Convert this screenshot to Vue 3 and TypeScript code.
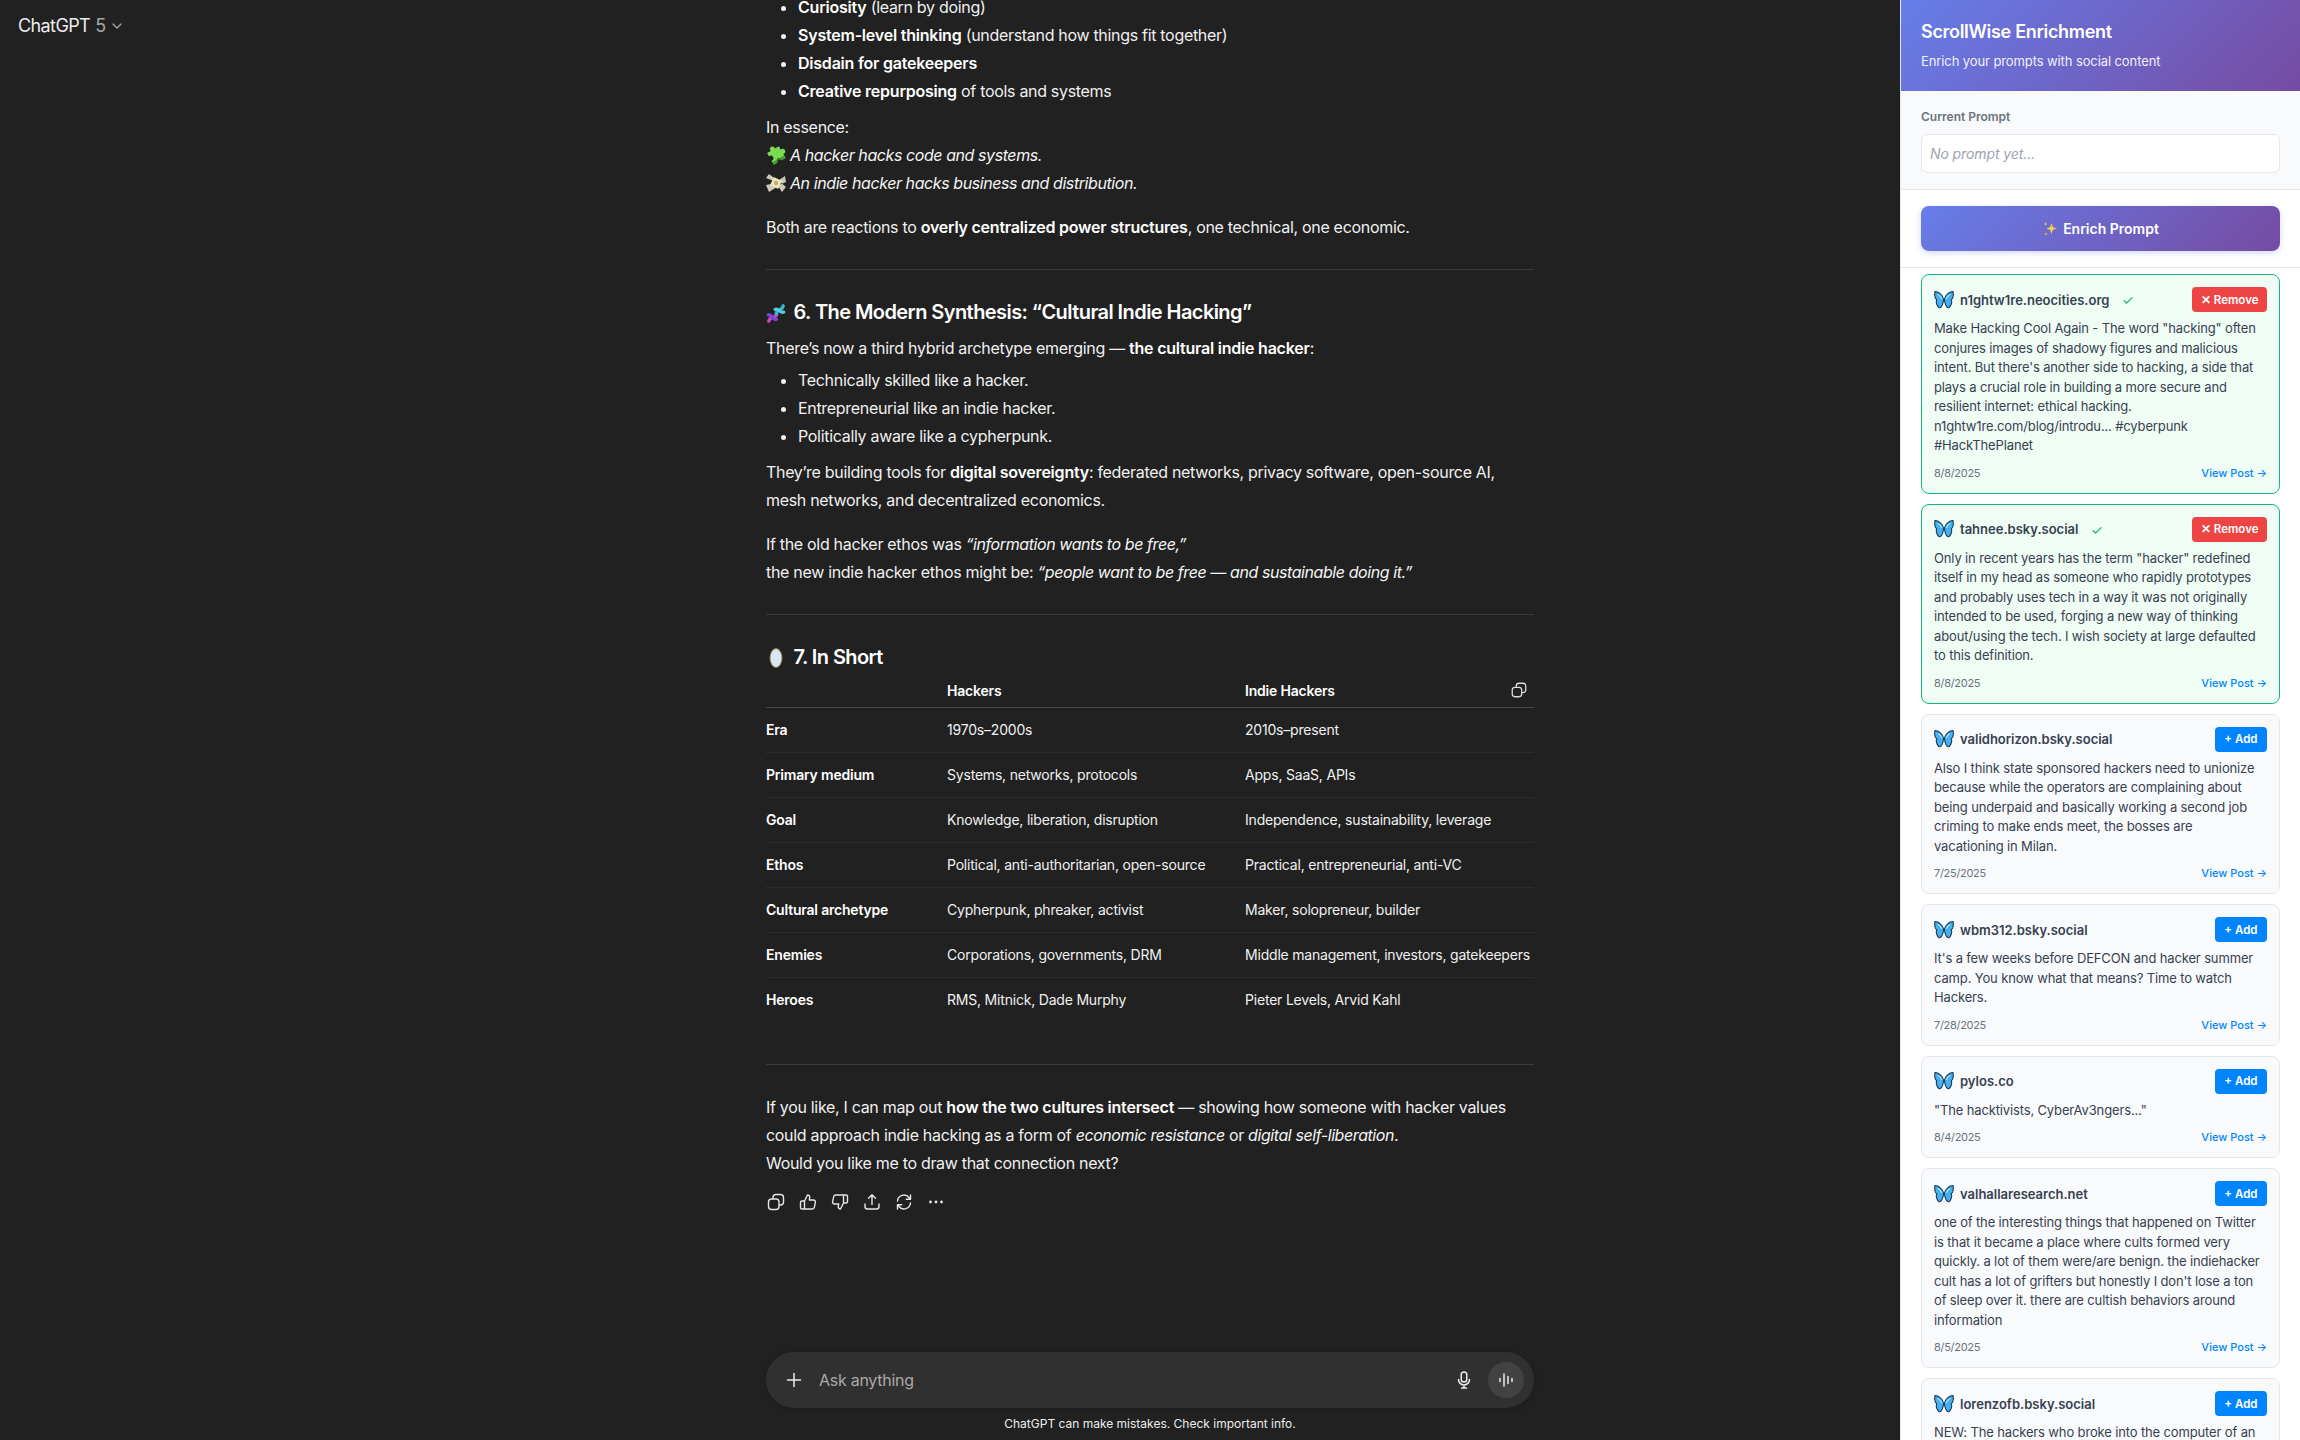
<template>
  <div class="page">
    <main class="chat">
      <!-- 顶部模型选择 -->
      <div class="model-switch">
        <span>ChatGPT</span>
        <span class="model-num">5</span>
        <svg width="10" height="6" viewBox="0 0 10 6" fill="none" stroke="#a8a8a8" stroke-width="1.3" stroke-linecap="round" stroke-linejoin="round"><path d="M1 1l4 4 4-4" /></svg>
      </div>

      <div class="thread">
        <div class="article">
          <ul class="first-list">
            <li><b>Curiosity</b> (learn by doing)</li>
            <li><b>System-level thinking</b> (understand how things fit together)</li>
            <li><b>Disdain for gatekeepers</b></li>
            <li><b>Creative repurposing</b> of tools and systems</li>
          </ul>
          <p>
            In essence:<br />
            <svg class="emoji" viewBox="0 0 20 20">
              <g transform="rotate(-30 10 10) translate(10 10) scale(1.12) translate(-9.500 -11.500)">
                <path d="M3.500 6h3.700a2.300 2.300 0 1 1 4.400 0h4v3.500a2.300 2.300 0 1 1 0 4.400V18h-4a2.300 2.300 0 1 0-4.400 0H3.500v-4.100a2.300 2.300 0 1 0 0-4.400z" fill="#7bdc52" />
                <path d="M3.500 15.500V18h3.700a2.300 2.300 0 0 1 4.400 0h4v-2.500z" fill="#3f9a35" />
              </g>
            </svg>
            <i>A hacker hacks code and systems.</i><br />
            <svg class="emoji" viewBox="0 0 20 20">
              <path d="M10 9L0 5l3-4 8 6zM10 9l9-6 1 6-7 3zM10 10L0 12l3 7 8-5zM10 10l6 9 4-5-7-6z" fill="#cdcab8" />
              <rect x="5.500" y="5.500" width="9" height="9" rx="1" transform="rotate(25 10 10)" fill="#efe6bd" />
              <circle cx="10" cy="10" r="2.200" fill="#c2ae62" />
            </svg>
            <i>An indie hacker hacks business and distribution.</i>
          </p>
          <p>Both are reactions to <b>overly centralized power structures</b>, one technical, one economic.</p>
          <hr />
          <h3>
            <svg class="emoji dna" viewBox="0 0 22 22" fill="none" stroke-width="3.600" stroke-linecap="round">
              <path d="M3 20c2-7 8-2 9-8" stroke="#d43fc0" />
              <path d="M11 12c1-6 6-2 8-9" stroke="#38b6cf" />
              <path d="M2.500 13c4-1 5 7 9 5" stroke="#7a45d8" />
              <path d="M10 7c4-2 5 5 9.500 3" stroke="#4fd0dc" />
            </svg>
            6. The Modern Synthesis: “Cultural Indie Hacking”
          </h3>
          <p class="tight">There’s now a third hybrid archetype emerging — <b>the cultural indie hacker</b>:</p>
          <ul>
            <li>Technically skilled like a hacker.</li>
            <li>Entrepreneurial like an indie hacker.</li>
            <li>Politically aware like a cypherpunk.</li>
          </ul>
          <p>They’re building tools for <b>digital sovereignty</b>: federated networks, privacy software, open-source AI, mesh networks, and decentralized economics.</p>
          <p>If the old hacker ethos was <i>“information wants to be free,”</i><br />the new indie hacker ethos might be: <i>“people want to be free — and sustainable doing it.”</i></p>
          <hr />
          <h3 class="short">
            <svg class="emoji" viewBox="0 0 20 20">
              <ellipse cx="10" cy="10" rx="6.500" ry="10" fill="#9a7b4a" />
              <ellipse cx="10" cy="10" rx="5.500" ry="9" fill="#d7e9f7" />
            </svg>
            7. In Short
          </h3>
          <div class="table-wrap">
            <svg class="table-copy" width="18" height="18" viewBox="0 0 20 20" fill="none" stroke="#dcdcdc" stroke-width="1.4"><rect x="7" y="2.500" width="10.500" height="10.500" rx="3" /><rect x="2.500" y="7" width="10.500" height="10.500" rx="3" fill="#212121" /></svg>
            <table>
              <colgroup>
                <col class="col-a" />
                <col class="col-b" />
                <col />
              </colgroup>
              <thead>
                <tr>
                  <th></th>
                  <th>Hackers</th>
                  <th>Indie Hackers</th>
                </tr>
              </thead>
              <tbody>
                <tr v-for="row in compareRows" :key="row[0]">
                  <td class="row-name">{{ row[0] }}</td>
                  <td>{{ row[1] }}</td>
                  <td>{{ row[2] }}</td>
                </tr>
              </tbody>
            </table>
          </div>
          <hr class="after-table" />
          <p class="tight">
            If you like, I can map out <b>how the two cultures intersect</b> — showing how someone with hacker values could approach indie hacking as a form of <i>economic resistance</i> or <i>digital self-liberation</i>.<br />
            Would you like me to draw that connection next?
          </p>
          <div class="actions">
            <svg viewBox="0 0 20 20"><rect x="7" y="2.500" width="10.500" height="10.500" rx="3" /><rect x="2.500" y="7" width="10.500" height="10.500" rx="3" fill="#212121" /></svg>
            <svg viewBox="0 0 20 20"><path d="M6.500 9l3-6c1.500 0 2.500 1 2.200 2.600L11.300 8h4.200c1.300 0 2.200 1.200 1.900 2.400l-1.100 5c-.2 1-1 1.600-2 1.600H6.500zM6.500 9H4a1.500 1.500 0 0 0-1.500 1.500v5A1.500 1.500 0 0 0 4 17h2.500" /></svg>
            <svg viewBox="0 0 20 20"><path d="M13.500 11l-3 6c-1.500 0-2.500-1-2.200-2.600L8.700 12H4.500c-1.300 0-2.200-1.200-1.900-2.400l1.100-5c.2-1 1-1.600 2-1.600h7.800zM13.500 11H16a1.500 1.500 0 0 0 1.500-1.500v-5A1.500 1.500 0 0 0 16 3h-2.500" /></svg>
            <svg viewBox="0 0 20 20"><path d="M10 12.500V3M6.500 6.300L10 2.800l3.500 3.500M3 12v2.500A2.500 2.500 0 0 0 5.500 17h9a2.500 2.500 0 0 0 2.500-2.500V12" /></svg>
            <svg viewBox="0 0 20 20"><path d="M3.500 9a6.500 6.500 0 0 1 11.500-3.500l1.500 1.700M16.500 3v4.200h-4.200M16.500 11a6.500 6.500 0 0 1-11.500 3.500l-1.500-1.700M3.500 17v-4.200h4.200" /></svg>
            <svg viewBox="0 0 20 20"><circle cx="4.500" cy="10" r=".7" /><circle cx="10" cy="10" r=".7" /><circle cx="15.500" cy="10" r=".7" /></svg>
          </div>
        </div>
      </div>

      <!-- 输入框 -->
      <div class="composer-area">
        <div class="composer">
          <svg class="plus" width="16" height="16" viewBox="0 0 16 16" fill="none" stroke="#ececec" stroke-width="1.5" stroke-linecap="round"><path d="M8 1.500v13M1.500 8h13" /></svg>
          <span class="placeholder">Ask anything</span>
          <svg class="mic" width="20" height="20" viewBox="0 0 20 20" fill="none" stroke="#ececec" stroke-width="1.500" stroke-linecap="round"><rect x="7.200" y="2" width="5.600" height="10" rx="2.800" /><path d="M4.500 9.500a5.500 5.500 0 0 0 11 0M10 15v3M7.500 18h5" /></svg>
          <span class="voice">
            <svg width="18" height="18" viewBox="0 0 18 18" fill="none" stroke="#ececec" stroke-width="1.500" stroke-linecap="round"><path d="M3 7.500v3M7 3v12M11 5.500v7M15 7.500v3" /></svg>
          </span>
        </div>
        <div class="disclaimer">ChatGPT can make mistakes. Check important info.</div>
      </div>
    </main>

    <aside class="panel">
      <header class="panel-head">
        <h2>ScrollWise Enrichment</h2>
        <p>Enrich your prompts with social content</p>
      </header>
      <section class="prompt-box">
        <label>Current Prompt</label>
        <div class="prompt-input">No prompt yet...</div>
      </section>
      <section class="enrich-box">
        <button class="enrich-btn">
          <svg width="16" height="16" viewBox="0 0 16 16">
            <path d="M9.500 2l1.300 4.200L15 7.500l-4.200 1.300L9.500 13 8.200 8.800 4 7.500l4.200-1.300z" fill="#f7d64a" />
            <path d="M3.500 1l.5 1.500 1.500.5-1.500.5L3.500 5 3 3.500 1.500 3 3 2.500z" fill="#f2c94c" />
            <path d="M4 11l.5 1.500 1.500.5-1.500.5L4 15l-.5-1.500L2 13l1.500-.5z" fill="#e8bd3f" />
          </svg>
          Enrich Prompt
        </button>
      </section>
      <div class="post-list">
        <article v-for="post in posts" :key="post.handle" class="post" :class="{ selected: post.added }">
          <div class="post-top">
            <div class="author">
              <svg class="butterfly" width="20" height="18" viewBox="0 0 20 18">
                <path d="M9.700 8.500C9 4.500 5 .8 1 .5c-.6 3.500-.3 7 1.800 8.500-1 1.500-.5 5 2 7.500 2.200 1 3.800-1.500 4.900-8z" fill="#46b0ee" stroke="#17365a" stroke-width="1.100" stroke-linejoin="round" />
                <path d="M10.300 8.500C11 4.500 15 .8 19 .5c.6 3.500.3 7-1.800 8.500 1 1.500.5 5-2 7.500-2.200 1-3.800-1.500-4.900-8z" fill="#46b0ee" stroke="#17365a" stroke-width="1.100" stroke-linejoin="round" />
                <path d="M4 3.500c1.500.8 3 2.500 4 4.500M16 3.500c-1.500.8-3 2.500-4 4.500" stroke="#a8e0fb" stroke-width="1.200" fill="none" />
              </svg>
              <span class="handle">{{ post.handle }}</span>
              <span v-if="post.added" class="tick">✓</span>
            </div>
            <button v-if="post.added" class="btn-remove">✕ Remove</button>
            <button v-else class="btn-add">+ Add</button>
          </div>
          <p class="post-text">{{ post.text }}</p>
          <div class="post-foot">
            <span class="post-date">{{ post.date }}</span>
            <span class="post-link">View Post →</span>
          </div>
        </article>
      </div>
    </aside>
  </div>
</template>

<script setup lang="ts">
interface Post {
  handle: string
  text: string
  date: string
  added?: boolean
}

const compareRows: string[][] = [
  ['Era', '1970s–2000s', '2010s–present'],
  ['Primary medium', 'Systems, networks, protocols', 'Apps, SaaS, APIs'],
  ['Goal', 'Knowledge, liberation, disruption', 'Independence, sustainability, leverage'],
  ['Ethos', 'Political, anti-authoritarian, open-source', 'Practical, entrepreneurial, anti-VC'],
  ['Cultural archetype', 'Cypherpunk, phreaker, activist', 'Maker, solopreneur, builder'],
  ['Enemies', 'Corporations, governments, DRM', 'Middle management, investors, gatekeepers'],
  ['Heroes', 'RMS, Mitnick, Dade Murphy', 'Pieter Levels, Arvid Kahl'],
]

const posts: Post[] = [
  {
    handle: 'n1ghtw1re.neocities.org',
    added: true,
    date: '8/8/2025',
    text: 'Make Hacking Cool Again - The word "hacking" often conjures images of shadowy figures and malicious intent. But there\'s another side to hacking, a side that plays a crucial role in building a more secure and resilient internet: ethical hacking. n1ghtw1re.com/blog/introdu... #cyberpunk #HackThePlanet',
  },
  {
    handle: 'tahnee.bsky.social',
    added: true,
    date: '8/8/2025',
    text: 'Only in recent years has the term "hacker" redefined itself in my head as someone who rapidly prototypes and probably uses tech in a way it was not originally intended to be used, forging a new way of thinking about/using the tech. I wish society at large defaulted to this definition.',
  },
  {
    handle: 'validhorizon.bsky.social',
    date: '7/25/2025',
    text: 'Also I think state sponsored hackers need to unionize because while the operators are complaining about being underpaid and basically working a second job criming to make ends meet, the bosses are vacationing in Milan.',
  },
  {
    handle: 'wbm312.bsky.social',
    date: '7/28/2025',
    text: 'It\'s a few weeks before DEFCON and hacker summer camp. You know what that means? Time to watch Hackers.',
  },
  {
    handle: 'pylos.co',
    date: '8/4/2025',
    text: '"The hacktivists, CyberAv3ngers..."',
  },
  {
    handle: 'valhallaresearch.net',
    date: '8/5/2025',
    text: 'one of the interesting things that happened on Twitter is that it became a place where cults formed very quickly. a lot of them were/are benign. the indiehacker cult has a lot of grifters but honestly I don\'t lose a ton of sleep over it. there are cultish behaviors around information',
  },
  {
    handle: 'lorenzofb.bsky.social',
    date: '8/5/2025',
    text: 'NEW: The hackers who broke into the computer of an',
  },
]
</script>

<style>
html,
body {
  margin: 0;
  background: #212121;
}
</style>

<style scoped>
.page {
  display: flex;
  width: 2300px;
  height: 1440px;
  overflow: hidden;
  font-family: Inter, "Liberation Sans", sans-serif;
}

.chat {
  position: relative;
  display: flex;
  flex-direction: column;
  width: 1900px;
  height: 1440px;
  flex-shrink: 0;
  background: #212121;
  color: #f0f0f0;
}

.model-switch {
  position: absolute;
  top: 14px;
  left: 18px;
  display: flex;
  align-items: center;
  gap: 5px;
  font-size: 18px;
  line-height: 24px;
  letter-spacing: -0.6px;
  color: #ececec;
}

.model-num {
  color: #a8a8a8;
}

.model-switch svg {
  margin-left: 2px;
}

.thread {
  flex: 1;
  min-height: 0;
  overflow: hidden;
}

.article {
  width: 768px;
  margin: -7px 0 0 766px;
  font-size: 16px;
  line-height: 28px;
  letter-spacing: -0.31px;
}

.article b {
  font-weight: 600;
  letter-spacing: -0.22px;
  color: #fff;
}

.article i {
  letter-spacing: -0.42px;
  color: #f4f4f4;
}

p {
  margin: 0 0 16px;
}

p.tight {
  margin-bottom: 4px;
}

ul {
  margin: 0 0 8px;
  padding-left: 32px;
}

.first-list {
  margin-bottom: 8px;
}

.emoji {
  width: 20px;
  height: 20px;
  margin-right: 4px;
  vertical-align: -4px;
}

hr {
  height: 1px;
  margin: 28px 0;
  border: none;
  background: #3b3b3b;
}

hr.after-table {
  margin-top: 42px;
}

h3 {
  margin: -1px 0 7px;
  font-size: 20px;
  font-weight: 600;
  line-height: 30px;
  letter-spacing: -0.57px;
  color: #fff;
}

h3 .emoji {
  margin-right: 3px;
}

h3.short {
  margin-bottom: 3px;
}

.table-wrap {
  position: relative;
}

.table-copy {
  position: absolute;
  top: 6px;
  right: 6px;
}

table {
  width: 100%;
  border-collapse: collapse;
  table-layout: fixed;
  font-size: 14px;
  line-height: 20px;
  letter-spacing: -0.2px;
}

.col-a {
  width: 181px;
}

.col-b {
  width: 298px;
}

th {
  height: 32px;
  padding: 0;
  text-align: left;
  font-weight: 600;
  color: #fff;
  border-bottom: 1px solid #484848;
}

td {
  height: 44px;
  padding: 0;
  white-space: nowrap;
  border-bottom: 1px solid #2d2d2d;
}

tr:last-child td {
  border-bottom: none;
}

.row-name {
  font-weight: 600;
  color: #fff;
}

.actions {
  display: flex;
  gap: 12px;
  margin-top: 15px;
}

.actions svg {
  width: 20px;
  height: 20px;
  fill: none;
  stroke: #e6e6e6;
  stroke-width: 1.4;
  stroke-linecap: round;
  stroke-linejoin: round;
}

.composer-area {
  flex-shrink: 0;
  width: 768px;
  margin-left: 766px;
  padding-bottom: 8px;
}

.composer {
  display: flex;
  align-items: center;
  height: 56px;
  padding: 0 10px 0 20px;
  border-radius: 28px;
  background: #303030;
  box-shadow: 0 1px 6px rgba(0, 0, 0, 0.15);
}

.placeholder {
  flex: 1;
  margin-left: 17px;
  font-size: 16px;
  letter-spacing: -0.27px;
  color: #a9a9a9;
}

.mic {
  margin-right: 14px;
}

.voice {
  display: flex;
  align-items: center;
  justify-content: center;
  width: 36px;
  height: 36px;
  border-radius: 50%;
  background: #424242;
}

.disclaimer {
  margin-top: 8px;
  font-size: 12px;
  line-height: 16px;
  text-align: center;
  color: #ececec;
}

.panel {
  width: 400px;
  height: 1440px;
  flex-shrink: 0;
  overflow: hidden;
  box-sizing: border-box;
  border-left: 1px solid #e5e7eb;
  background: #fff;
}

.panel-head {
  box-sizing: border-box;
  height: 91px;
  padding: 20px 20px 0;
  color: #fff;
  background: linear-gradient(135deg, #667eea 0%, #764ba2 100%);
}

.panel-head h2 {
  margin: 0;
  font-size: 18px;
  font-weight: 600;
  line-height: 24px;
  letter-spacing: -0.3px;
}

.panel-head p {
  margin: 9px 0 0;
  font-size: 13px;
  line-height: 16px;
  letter-spacing: -0.1px;
  opacity: 0.9;
}

.prompt-box {
  box-sizing: border-box;
  height: 99px;
  padding: 18px 20px 0;
  border-bottom: 1px solid #e5e7eb;
  background: #f9fafb;
}

.prompt-box label {
  display: block;
  font-size: 12px;
  font-weight: 600;
  line-height: 16px;
  color: #6b7280;
}

.prompt-input {
  box-sizing: border-box;
  height: 39px;
  margin-top: 9px;
  padding: 0 8px;
  border: 1px solid #e5e7eb;
  border-radius: 6px;
  background: #fff;
  font-size: 14px;
  font-style: italic;
  line-height: 37px;
  letter-spacing: -0.1px;
  color: #9ca3af;
}

.enrich-box {
  box-sizing: border-box;
  height: 78px;
  padding: 16px 20px 0;
  border-bottom: 1px solid #e5e7eb;
}

.enrich-btn {
  display: flex;
  align-items: center;
  justify-content: center;
  gap: 5px;
  width: 100%;
  height: 45px;
  border: none;
  border-radius: 8px;
  color: #fff;
  background: linear-gradient(135deg, #667eea 0%, #764ba2 100%);
  box-shadow: 0 2px 6px rgba(102, 126, 234, 0.3);
  font-family: inherit;
  font-size: 14px;
  font-weight: 600;
}

.post-list {
  display: flex;
  flex-direction: column;
  gap: 10px;
  padding: 6px 20px 0;
}

.post {
  padding: 12px;
  border: 1px solid #e5e7eb;
  border-radius: 8px;
  background: #f9fafb;
}

.post.selected {
  border-color: #10b981;
  background: #f0fdf4;
}

.post-top {
  display: flex;
  align-items: center;
  justify-content: space-between;
  height: 25px;
}

.author {
  display: flex;
  align-items: center;
}

.handle {
  margin-left: 6px;
  font-size: 13px;
  font-weight: 600;
  color: #374151;
}

.tick {
  margin-left: 12px;
  font-size: 14px;
  color: #10b981;
}

.btn-remove,
.btn-add {
  height: 25px;
  padding: 0 9.500px;
  border: none;
  border-radius: 4px;
  color: #fff;
  font-family: inherit;
  font-size: 11.500px;
  font-weight: 600;
}

.btn-remove {
  padding: 0 8.500px;
  background: #ef4444;
}

.btn-add {
  background: #0085ff;
}

.post-text {
  margin: 7px 0 0;
  padding-right: 4px;
  font-size: 13px;
  line-height: 19.5px;
  letter-spacing: -0.14px;
  color: #374151;
}

.post-foot {
  display: flex;
  align-items: center;
  justify-content: space-between;
  margin-top: 9px;
  line-height: 16px;
  font-size: 11px;
}

.post-date {
  letter-spacing: -0.3px;
  color: #6b7280;
}

.post-link {
  font-weight: 500;
  color: #0085ff;
}
</style>
